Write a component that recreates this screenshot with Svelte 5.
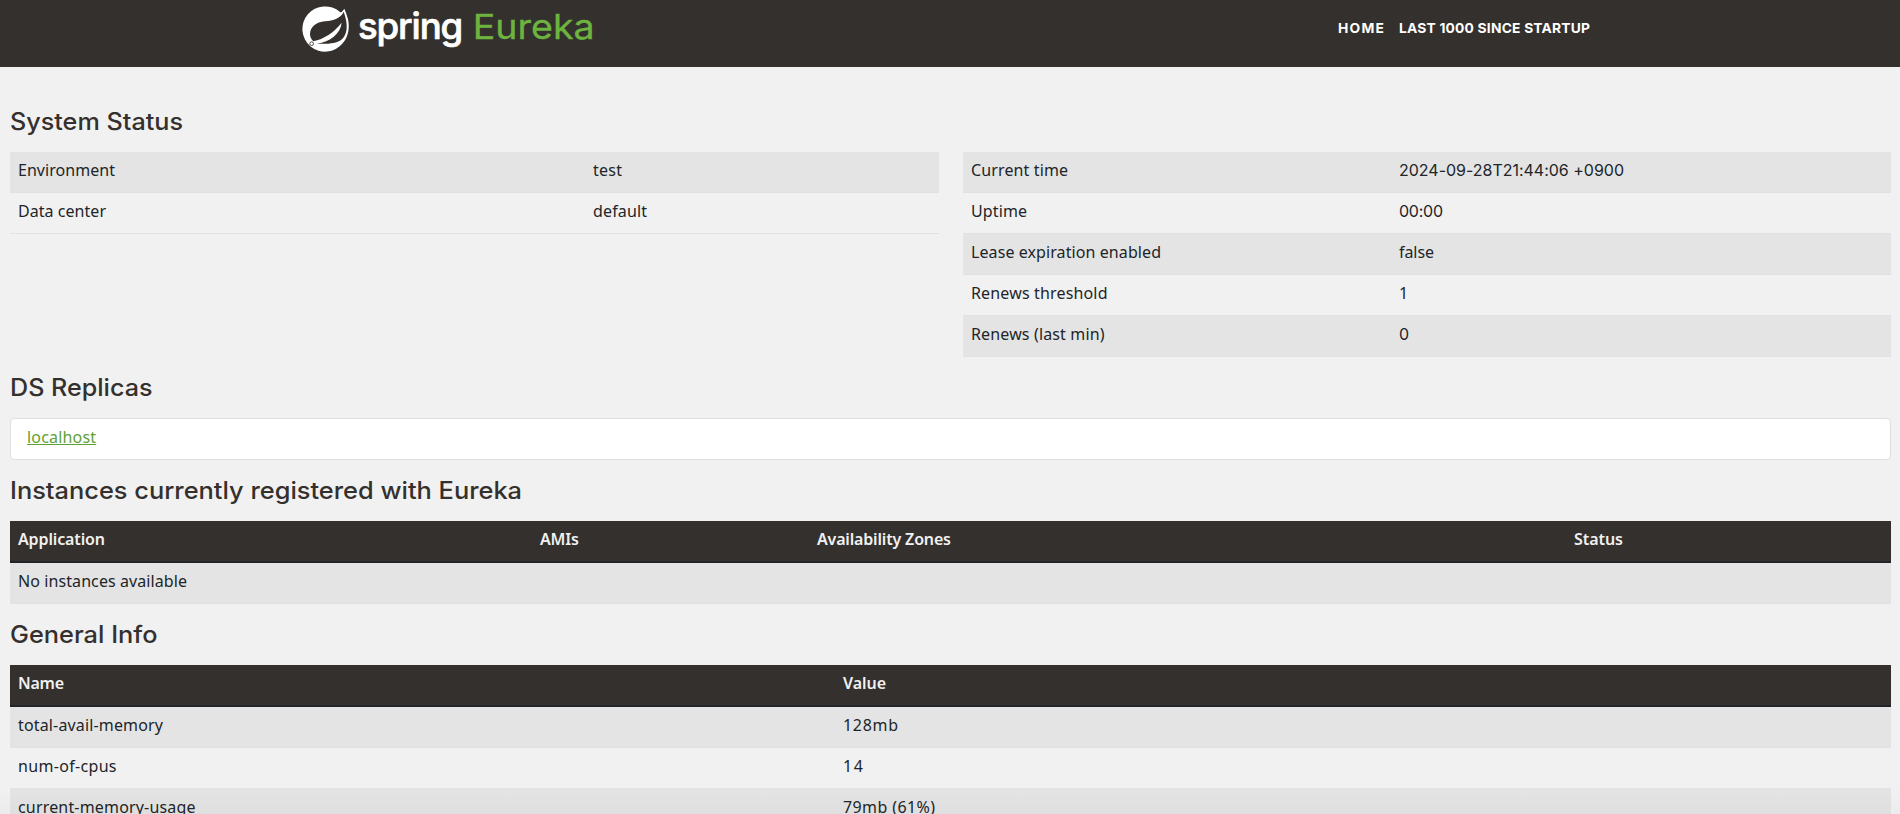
<script>
  const status = [
    [['Environment', 97], ['test', 29]],
    [['Data center', 88], ['default', 54]],
  ];
  const runtime = [
    [['Current time', 97], ['2024-09-28T21:44:06 +0900', 225]],
    [['Uptime', 56], ['00:00', 44]],
    [['Lease expiration enabled', 190], ['false', 35]],
    [['Renews threshold', 136.5], ['1', 9]],
    [['Renews (last min)', 133.5], ['0', 10]],
  ];
  const instanceHead = [['Application', 87], ['AMIs', 39], ['Availability Zones', 134], ['Status', 49]];
  const generalHead = [['Name', 46], ['Value', 43]];
  const general = [
    [['total-avail-memory', 145], ['128mb', 55]],
    [['num-of-cpus', 98.5], ['14', 20]],
    [['current-memory-usage', 177.5], ['79mb (61%)', 92]],
  ];

  // Tracks a label out (or in) so that it takes the given width.
  function fit(node, width) {
    const n = node.textContent.length;
    if (n < 2) return;
    const natural = node.getBoundingClientRect().width;
    node.style.letterSpacing = `${(width - natural) / (n - 1)}px`;
    node.style.marginRight = `${-(width - natural) / (n - 1)}px`;
  }

  // Widens the letters themselves to the given width.
  function widen(node, width) {
    const natural = node.getBoundingClientRect().width;
    node.style.transform = `scaleX(${width / natural})`;
  }
</script>

{#snippet row(cells, cols, kind)}
  <div class="row {kind} {cols}">
    {#each cells as [text, width]}
      <div class="cell" class:num={/^[02]/.test(text)}><span use:fit={width}>{text}</span></div>
    {/each}
  </div>
{/snippet}

<div class="page">
  <header>
    <svg class="logo" width="320" height="67" viewBox="0 0 960 201" role="img" aria-label="Spring Eureka">
      <path fill="#fff" d="M163 26 C157 35 152 39 150 36 A68 68 0 1 0 158 130 C174 113 180 84 174 58 C171 46 167 36 163 26 Z" />
      <path fill="#34302d" d="M161 35 C151 56 132 61 105 64 C78 67 61 80 60 102 C60 111 64 118 70 124 C101 117 132 98 155 68 C151 101 121 126 80 131 C113 133 139 130 153 120 C172 105 176 76 161 35 Z" />
      <circle cx="65" cy="131" r="5.5" fill="#fff" stroke="#34302d" stroke-width="2.5" />
      <text class="spring" x="204" y="116" textLength="316">spring</text>
      <text class="eureka" x="548" y="117" textLength="366" lengthAdjust="spacingAndGlyphs">Eureka</text>
    </svg>
    <nav>
      <a href="#home"><span use:fit={46}>HOME</span></a>
      <a href="#lastn"><span use:fit={191}>LAST 1000 SINCE STARTUP</span></a>
    </nav>
  </header>

  <main>
    <h1><span use:widen={173}>System Status</span></h1>
    <div class="columns">
      <div class="table">
        {#each status as cells}{@render row(cells, 'c-status', 'data')}{/each}
      </div>
      <div class="table">
        {#each runtime as cells}{@render row(cells, 'c-runtime', 'data')}{/each}
      </div>
    </div>

    <h1><span use:widen={142.5}>DS Replicas</span></h1>
    <div class="list"><a href="#localhost"><span use:fit={69}>localhost</span></a></div>

    <h1><span use:widen={512}>Instances currently registered with Eureka</span></h1>
    <div class="table">
      {@render row(instanceHead, 'c-instances', 'head')}
      {@render row([['No instances available', 169]], 'c-single', 'data')}
    </div>

    <h1><span use:widen={147.5}>General Info</span></h1>
    <div class="table">
      {@render row(generalHead, 'c-general', 'head')}
      {#each general as cells}{@render row(cells, 'c-general', 'data')}{/each}
    </div>
  </main>
  <div class="shade"></div>
</div>

<style>
  :global(body) {
    margin: 0;
    overflow: hidden;
  }
  .page {
    position: relative;
    height: 814px;
    overflow: hidden;
    background: #f1f1f1;
    color: #212529;
    font: 16px/24px 'Noto Sans', sans-serif;
  }
  header {
    display: flex;
    justify-content: space-between;
    height: 67px;
    padding: 0 310px 0 290px;
    background: #34302d;
  }
  .logo {
    display: block;
  }
  .spring {
    font: 500 110px Inter, sans-serif;
    fill: #fff;
    stroke: #fff;
    stroke-width: 2;
    stroke-linejoin: round;
  }
  .eureka {
    font: 400 102px Inter, sans-serif;
    fill: #6db33f;
    stroke: #6db33f;
    stroke-width: 1;
    stroke-linejoin: round;
  }
  nav {
    display: flex;
    gap: 15px;
    padding-top: 16px;
    font: 700 13.8px/24px Inter, sans-serif;
  }
  nav a {
    color: #fff;
    text-decoration: none;
  }
  span {
    display: inline-block;
    white-space: pre;
    transform-origin: 0 50%;
  }
  main {
    padding: 40px 9px 0 10px;
  }
  h1 {
    height: 30px;
    margin: 0 0 15px;
    color: #34302d;
    font: 500 24px/30px Inter, sans-serif;
  }
  .columns {
    display: grid;
    grid-template-columns: 929px 928px;
    gap: 24px;
  }
  .table,
  .list {
    margin-bottom: 16px;
  }
  .row {
    display: grid;
    box-sizing: border-box;
    height: 41px;
    border-bottom: 1px solid #dee2e6;
  }
  .data:nth-child(odd) {
    background: #e4e4e4;
  }
  .head {
    height: 42px;
    border-bottom: 2px solid #212529;
    background: #34302d;
    color: #f1f1f1;
    font-weight: 600;
  }
  .head ~ .data:nth-child(odd) {
    background: none;
  }
  .head ~ .data:nth-child(even) {
    background: #e4e4e4;
  }
  .c-status {
    grid-template-columns: 575px 1fr;
  }
  .c-runtime {
    grid-template-columns: 428px 1fr;
  }
  .c-instances {
    grid-template-columns: 522px 277px 757px 1fr;
  }
  .c-general {
    grid-template-columns: 825px 1fr;
  }
  .cell {
    padding: 6px 8px 0;
  }
  .num {
    font-family: Inter, sans-serif;
  }
  .list {
    box-sizing: border-box;
    height: 42px;
    padding: 6px 16px 0;
    border: 1px solid #dfdfdf;
    border-radius: 4px;
    background: #fff;
  }
  .list a span {
    color: #5fa134;
    text-decoration: underline;
  }
  .shade {
    position: absolute;
    inset: auto 0 0;
    height: 26px;
    background: linear-gradient(rgba(0, 0, 0, 0), rgba(0, 0, 0, 0.025));
  }
</style>
